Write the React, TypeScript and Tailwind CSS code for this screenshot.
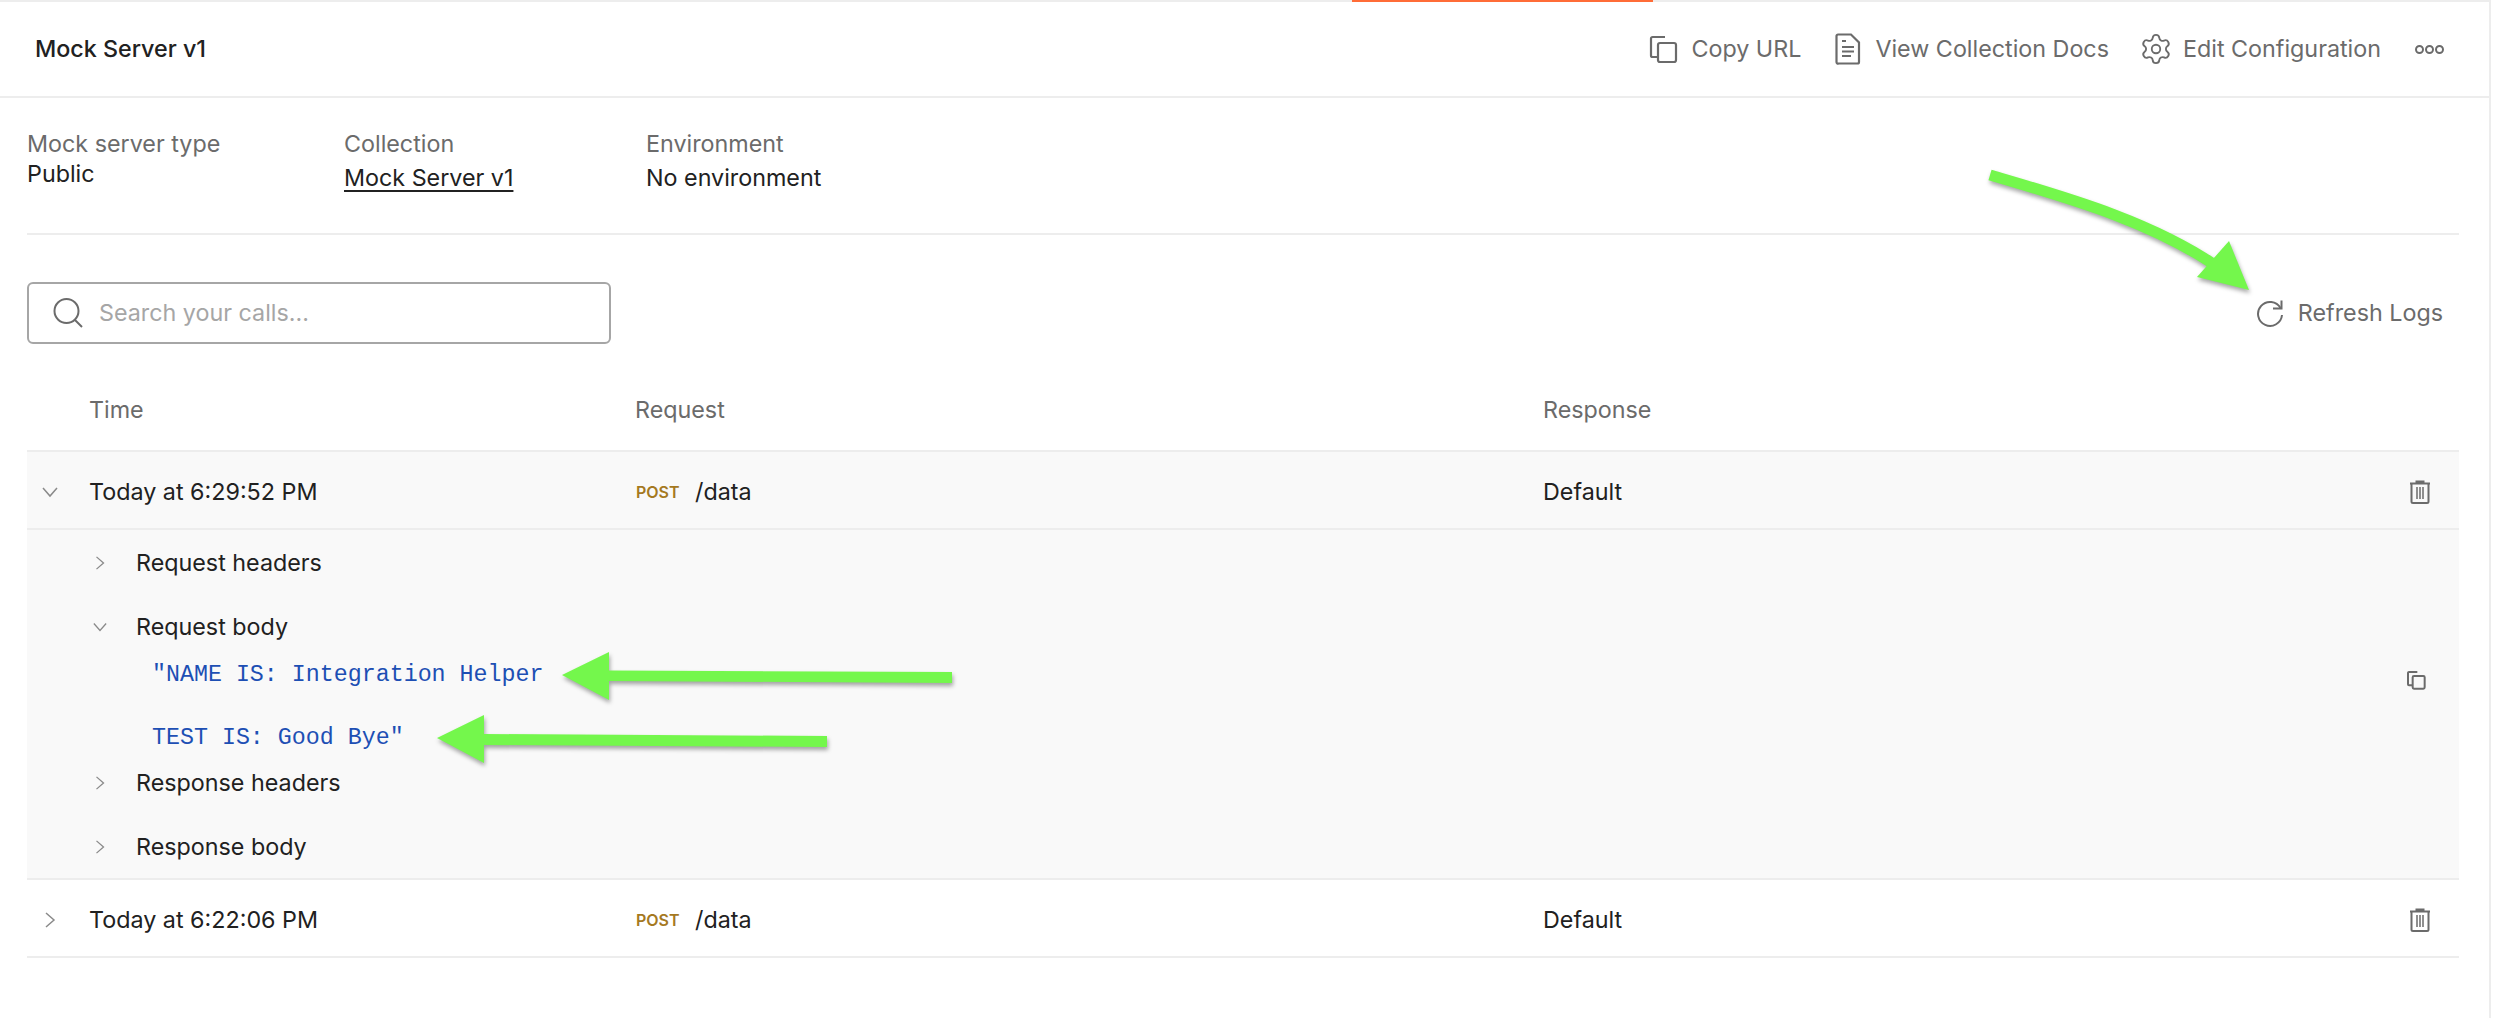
import { Settings } from 'lucide-react'

function CopyIcon({ size = 30, stroke = 2.2 }: { size?: number; stroke?: number }) {
  return (
    <svg width={size} height={size} viewBox="0 0 30 30" fill="none" stroke="#6b6b6b" strokeWidth={stroke}>
      <path d="M10 23H4.500a1.500 1.500 0 0 1-1.500-1.500V4.500A1.500 1.500 0 0 1 4.500 3H17" />
      <rect x="10" y="9" width="18" height="19" rx="2" />
    </svg>
  )
}

function DocIcon() {
  return (
    <svg width="26" height="32" viewBox="0 0 26 32" fill="none" stroke="#6b6b6b" strokeWidth="2.2">
      <path d="M3 1.500h13l8 8V29a1.500 1.500 0 0 1-1.500 1.500h-19A1.500 1.500 0 0 1 1.500 29V3A1.500 1.500 0 0 1 3 1.500Z" />
      <path d="M7 8h4M7 14h12M7 18.500h12M7 23h9" />
    </svg>
  )
}

function SearchIcon() {
  return (
    <svg width="30" height="30" viewBox="0 0 30 30" fill="none" stroke="#6b6b6b" strokeWidth="2">
      <circle cx="13.500" cy="13" r="12" />
      <path d="m22 22 7 7" />
    </svg>
  )
}

function RefreshIcon() {
  return (
    <svg width="28" height="28" viewBox="0 0 28 28" fill="none" stroke="#6b6b6b" strokeWidth="2">
      <path d="M24.500 9A12 12 0 1 0 26 16" />
      <path d="M25.500 1.500V9.500H17" />
    </svg>
  )
}

function TrashIcon() {
  return (
    <svg width="22" height="24" viewBox="0 0 22 24" fill="none" stroke="#6b6b6b" strokeWidth="2">
      <path d="M1 3.500h20M7.500 3V1.500h7V3" />
      <path d="M2.500 4v17.500A1.500 1.500 0 0 0 4 23h14a1.500 1.500 0 0 0 1.500-1.500V4" />
      <path d="M8 7v12M11 7v12M14 7v12" strokeWidth="1.500" />
    </svg>
  )
}

function ChevronDown({ w = 16 }: { w?: number }) {
  return (
    <svg width={w} height={w} viewBox="0 0 16 16" fill="none" stroke="#8a8a8a" strokeWidth="1.500">
      <path d="m1 4 7 8 7-8" />
    </svg>
  )
}

function ChevronRight({ h = 16 }: { h?: number }) {
  return (
    <svg width={h} height={h} viewBox="0 0 16 16" fill="none" stroke="#8a8a8a" strokeWidth="1.500">
      <path d="m4 1 8 7-8 7" />
    </svg>
  )
}

function HeaderAction({ icon, label, gap }: { icon: React.ReactNode; label: string; gap: string }) {
  return (
    <div className={`flex items-center ${gap}`}>
      {icon}
      <span>{label}</span>
    </div>
  )
}

function CallRow({ time, open, bg }: { time: string; open?: boolean; bg?: string }) {
  return (
    <div className={`flex h-[78px] items-center border-t-2 border-[#ededed] pt-[4px] ${bg ?? ''}`}>
      <div className="w-[62px] pl-[15px]">{open ? <ChevronDown /> : <ChevronRight />}</div>
      <div className="w-[546px]">{time}</div>
      <div className="flex w-[908px] items-center">
        <span className="ml-[1px] w-[59px] text-[16px] font-semibold text-[#a5791f]">POST</span>
        <span>/data</span>
      </div>
      <div className="flex-1">Default</div>
      <div className="mr-[28px]"><TrashIcon /></div>
    </div>
  )
}

function SubRow({ label, open }: { label: string; open?: boolean }) {
  return (
    <div className="flex h-[64px] items-center pt-[1px]">
      <div className="flex w-[109px] justify-end pr-[29px]">
        {open ? <ChevronDown w={14} /> : <ChevronRight h={14} />}
      </div>
      <span>{label}</span>
    </div>
  )
}

// green annotation arrows sit on top of the page
function Arrows() {
  return (
    <svg className="pointer-events-none absolute top-0 left-0 drop-shadow-[1px_3px_2px_rgba(0,0,0,0.35)]" width="2500" height="1018" viewBox="0 0 2500 1018">
      <path d="M1990 175C2065 197 2155 222 2222 270" fill="none" stroke="#74f74c" strokeWidth="11" />
      <path d="M2249 290 2229 241 2197 277Z" fill="#74f74c" />
      <path d="M562 675 609 652V670.500L952 672V683L609 681V700Z" fill="#74f74c" />
      <path d="M437 738 484 715V734L827 736V747L484 745V763Z" fill="#74f74c" />
    </svg>
  )
}

export default function App() {
  return (
    <div className="relative h-[1018px] w-[2500px] overflow-hidden bg-white font-['Inter',sans-serif] text-[23.300px] leading-[30px] text-[#212121]">
      <div className="h-[1018px] w-[2491px] border-r-2 border-[#ededed]">
        <div className="flex h-[2px] bg-[#ededed]">
          <div className="ml-[1352px] w-[301px] bg-[#ff6c37]" />
        </div>
        <header className="flex h-[96px] items-center justify-between border-b-2 border-[#ededed] pr-[45px] pl-[35px]">
          <span className="font-medium">Mock Server v1</span>
          <div className="flex items-center text-[#6b6b6b]">
            <HeaderAction icon={<CopyIcon />} label="Copy URL" gap="gap-[13px]" />
            <div className="ml-[34px]">
              <HeaderAction icon={<DocIcon />} label="View Collection Docs" gap="gap-[14px]" />
            </div>
            <div className="ml-[30px]">
              <HeaderAction icon={<Settings size={34} strokeWidth={1.3} color="#6b6b6b" />} label="Edit Configuration" gap="gap-[10px]" />
            </div>
            <div className="ml-[34px] flex gap-[1px]">
              <span className="size-[9px] rounded-full border-2 border-[#6b6b6b]" />
              <span className="size-[9px] rounded-full border-2 border-[#6b6b6b]" />
              <span className="size-[9px] rounded-full border-2 border-[#6b6b6b]" />
            </div>
          </div>
        </header>

        <main className="w-[2459px] pl-[27px]">
          <section className="flex h-[137px] border-b-2 border-[#ededed] pt-[31px]">
            <div className="w-[317px]">
              <div className="text-[#6b6b6b]">Mock server type</div>
              <div>Public</div>
            </div>
            <div className="w-[302px]">
              <div className="text-[#6b6b6b]">Collection</div>
              <a className="mt-[4px] block underline underline-offset-[4px]" href="#collection">Mock Server v1</a>
            </div>
            <div>
              <div className="text-[#6b6b6b]">Environment</div>
              <div className="mt-[4px]">No environment</div>
            </div>
          </section>

          <section className="mt-[47px] flex items-center justify-between pr-[16px]">
            <div className="flex h-[62px] w-[584px] items-center gap-[16px] rounded-[6px] border-2 border-[#a6a6a6] pl-[24px]">
              <SearchIcon />
              <span className="text-[#a6a6a6]">Search your calls...</span>
            </div>
            <div className="flex items-center gap-[14px] text-[#6b6b6b]">
              <RefreshIcon />
              <span>Refresh Logs</span>
            </div>
          </section>

          <div className="mt-[26px] flex h-[80px] items-center text-[#6b6b6b]">
            <div className="w-[62px]" />
            <div className="w-[546px]">Time</div>
            <div className="w-[908px]">Request</div>
            <div>Response</div>
          </div>

          <CallRow time="Today at 6:29:52 PM" open bg="bg-[#f9f9f9]" />
          <div className="border-t-2 border-[#ededed] bg-[#f9f9f9]">
            <SubRow label="Request headers" />
            <SubRow label="Request body" open />
            <div className="flex h-[92px] justify-between pt-[2px] pr-[33px] pl-[125px] font-['Liberation_Mono',monospace] text-[23.300px] text-[#1d4fb4]">
              <div>
                <p>"NAME IS: Integration Helper</p>
                <p className="mt-[33px]">TEST IS: Good Bye"</p>
              </div>
              <div className="mt-[10px]"><CopyIcon size={20} stroke={3} /></div>
            </div>
            <SubRow label="Response headers" />
            <SubRow label="Response body" />
          </div>
          <CallRow time="Today at 6:22:06 PM" />
          <div className="border-t-2 border-[#ededed]" />
        </main>
      </div>
      <Arrows />
    </div>
  )
}
